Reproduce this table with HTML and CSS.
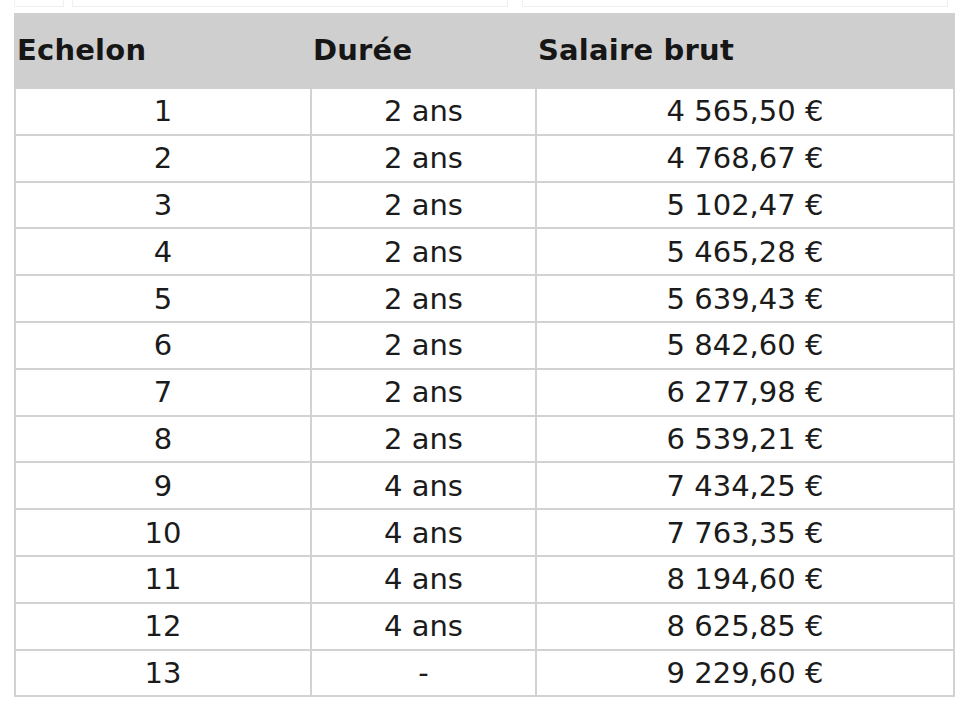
FILE: index.html
```html
<!DOCTYPE html>
<html lang="fr">
<head>
<meta charset="utf-8">
<link rel="stylesheet" href="styles.css">
</head>
<body>
<div class="top-strip">
  <div class="stub stub-a"></div>
  <div class="stub stub-b"></div>
  <div class="stub stub-c"></div>
</div>
<table class="grid">
  <colgroup>
    <col class="c1"><col class="c2"><col class="c3">
  </colgroup>
  <thead>
    <tr><th>Echelon</th><th>Durée</th><th>Salaire brut</th></tr>
  </thead>
  <tbody>
    <tr><td>1</td><td>2 ans</td><td>4 565,50 €</td></tr>
    <tr><td>2</td><td>2 ans</td><td>4 768,67 €</td></tr>
    <tr><td>3</td><td>2 ans</td><td>5 102,47 €</td></tr>
    <tr><td>4</td><td>2 ans</td><td>5 465,28 €</td></tr>
    <tr><td>5</td><td>2 ans</td><td>5 639,43 €</td></tr>
    <tr><td>6</td><td>2 ans</td><td>5 842,60 €</td></tr>
    <tr><td>7</td><td>2 ans</td><td>6 277,98 €</td></tr>
    <tr><td>8</td><td>2 ans</td><td>6 539,21 €</td></tr>
    <tr><td>9</td><td>4 ans</td><td>7 434,25 €</td></tr>
    <tr><td>10</td><td>4 ans</td><td>7 763,35 €</td></tr>
    <tr><td>11</td><td>4 ans</td><td>8 194,60 €</td></tr>
    <tr><td>12</td><td>4 ans</td><td>8 625,85 €</td></tr>
    <tr><td>13</td><td>-</td><td>9 229,60 €</td></tr>
  </tbody>
</table>
</body>
</html>
```
FILE: styles.css
```css
html, body {
  margin: 0;
  padding: 0;
  background: #ffffff;
}
body {
  font-family: "DejaVu Sans", "Liberation Sans", sans-serif;
  color: #1b1b1b;
  width: 968px;
  height: 705px;
  overflow: hidden;
}
.top-strip {
  display: flex;
  height: 8px;
  margin-top: -1px;
  padding-left: 14px;
  gap: 8px;
}
.stub {
  height: 8px;
  border: 1px solid #f0f0f0;
  border-top: none;
  box-sizing: border-box;
}
.stub-a { width: 50px; }
.stub-b { width: 436px; }
.stub-c { width: 426px; margin-left: 6px; }
.grid {
  margin: 6px 0 0 14px;
  border-collapse: collapse;
  table-layout: fixed;
  width: 939px;
}
.c1 { width: 296px; }
.c2 { width: 225px; }
.c3 { width: 418px; }
.grid th {
  background: #cfcfcf;
  height: 74px;
  padding: 0 1px 2px;
  text-align: left;
  font-weight: 700;
  font-size: 29px;
  letter-spacing: 0.2px;
  color: #161616;
  border: 2px solid #cfcfcf;
  box-sizing: border-box;
}
.grid td {
  height: 46.8px;
  padding: 0;
  text-align: center;
  font-size: 29px;
  border: 2px solid #d2d2d2;
  box-sizing: border-box;
}
```
